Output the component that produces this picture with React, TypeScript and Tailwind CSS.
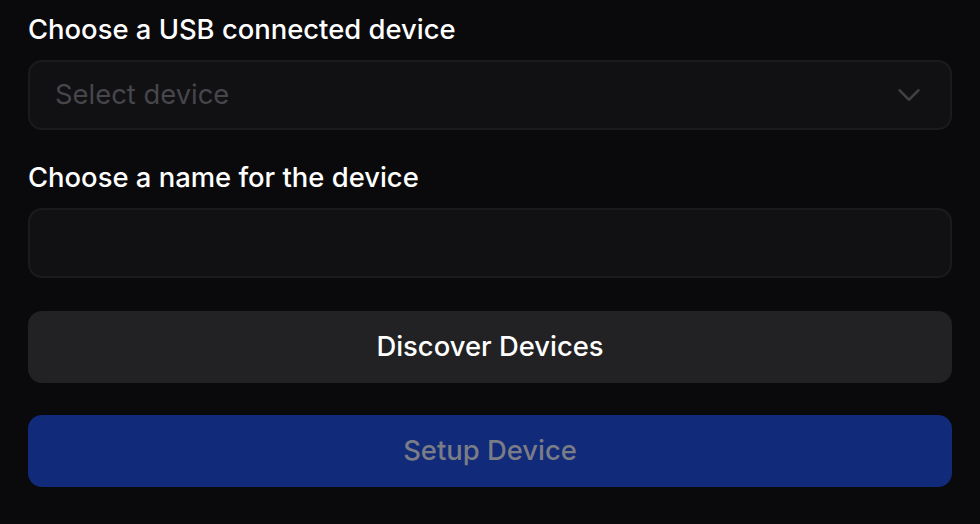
import * as React from "react"
import { ChevronDown } from "lucide-react"

export default function App() {
  const [name, setName] = React.useState("")

  return (
    <div
      className="min-h-[524px] w-full bg-[#0a0a0c] px-7 pt-[12px]"
      style={{ fontFamily: "Inter, 'Noto Sans', sans-serif" }}
    >
      <div className="flex flex-col">
        <label className="text-[27.4px] leading-[34px] font-medium text-white">Choose a USB connected device</label>
        <button className="mt-[14px] flex h-[70px] w-full items-center justify-between rounded-[14px] border-2 border-[#1b1b1e] bg-[#111113] pl-[25px] pr-[22px] text-left">
          <span className="text-[27.4px] text-[#46464b]">Select device</span>
          <ChevronDown className="h-[38px] w-[38px] text-[#3e3e43]" strokeWidth={1.6} />
        </button>

        <label className="mt-[30px] text-[27.4px] leading-[34px] font-medium text-white">Choose a name for the device</label>
        <input
          value={name}
          onChange={(e) => setName(e.target.value)}
          className="mt-[14px] h-[70px] w-full rounded-[14px] border-2 border-[#1b1b1e] bg-[#111113] px-[25px] text-[27.4px] text-white outline-none"
        />

        <button className="mt-[33px] h-[72px] w-full rounded-[14px] bg-[#222224] text-[27.4px] font-medium text-white">
          Discover Devices
        </button>
        <button className="mt-[32px] h-[72px] w-full rounded-[14px] bg-[#112a7a] text-[27.4px] font-medium text-[#7b7d86]">
          Setup Device
        </button>
      </div>
    </div>
  )
}
